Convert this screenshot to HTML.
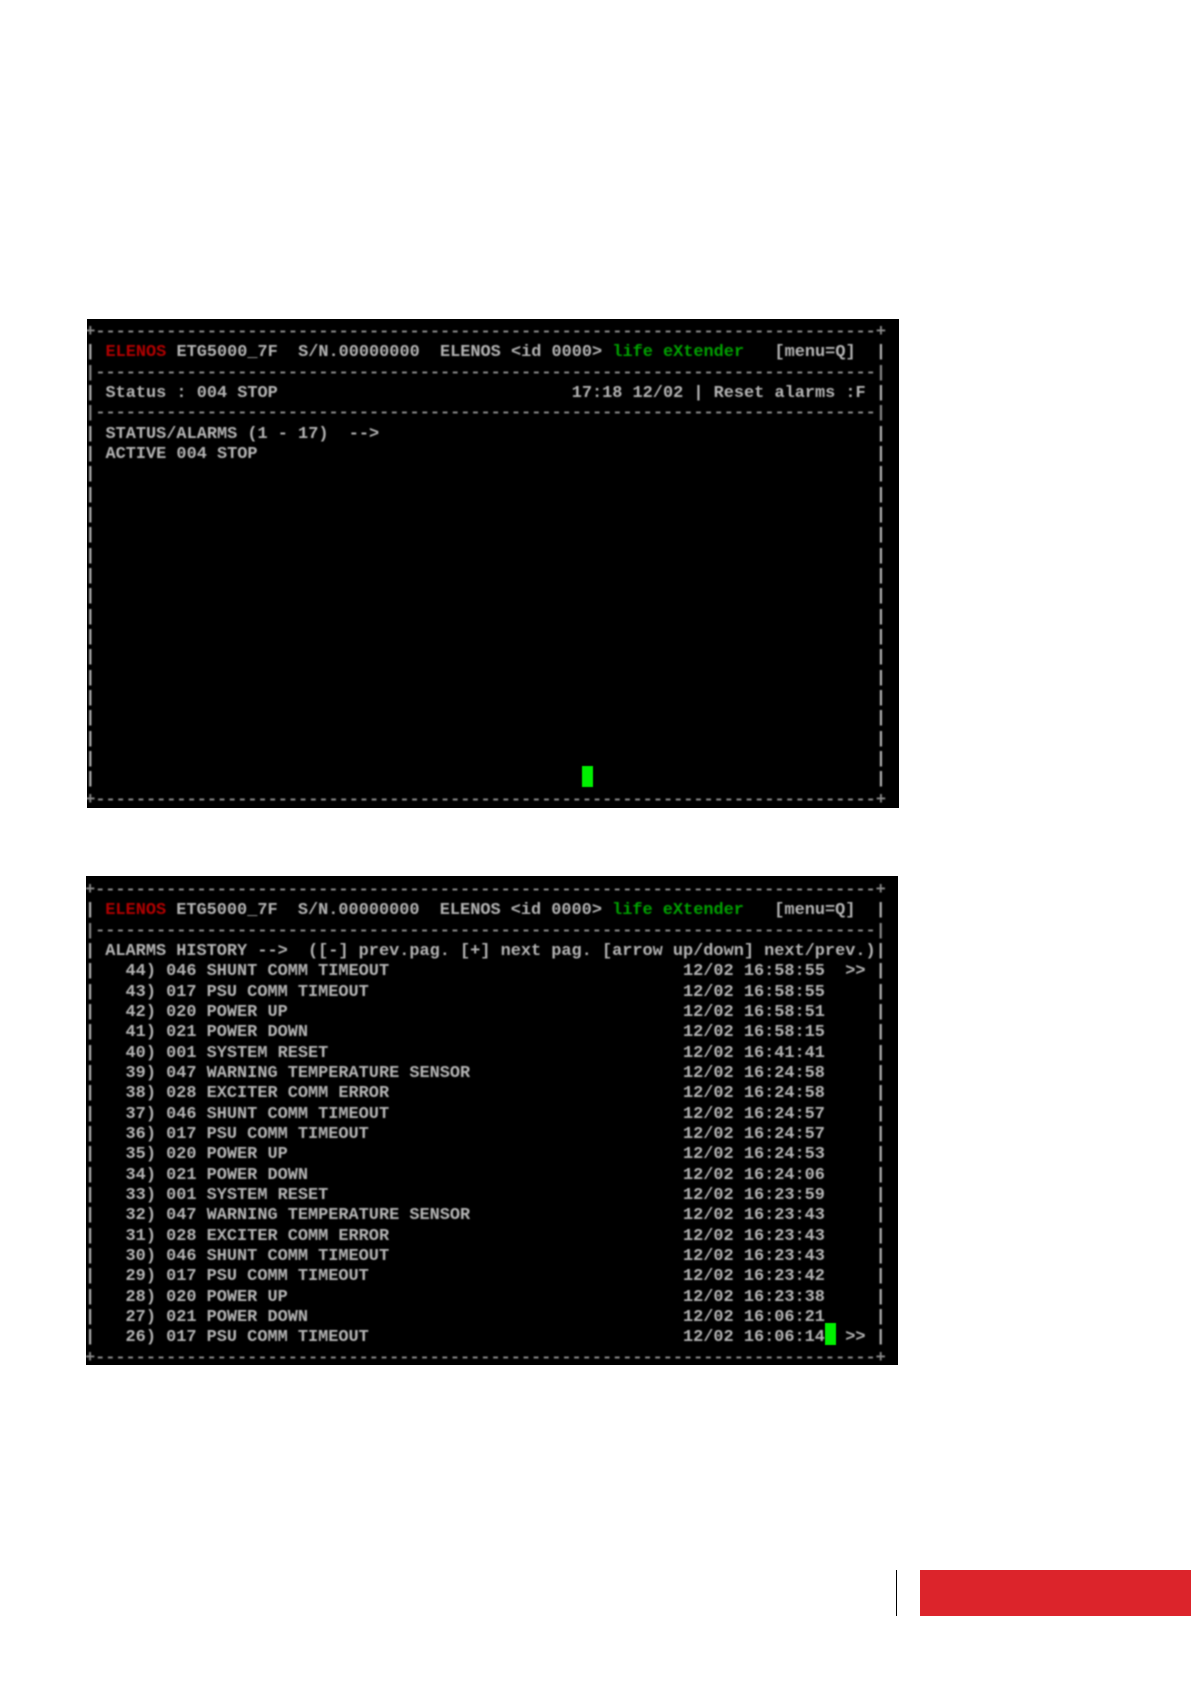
<!DOCTYPE html>
<html lang="en">
<head>
<meta charset="utf-8">
<title>Terminal screens</title>
<style>
html,body{margin:0;padding:0;background:#fff;}
body{position:relative;width:1191px;height:1684px;overflow:hidden;}
.term{position:absolute;background:#000;overflow:hidden;}
.in{position:absolute;font:bold 16.9px/20.33px "Liberation Mono",monospace;color:#b4b4b4;filter:blur(.8px);width:830px;}
.r{position:relative;height:20.33px;white-space:pre;}
.r::after{content:"|";position:absolute;left:78ch;top:0;}
.n::after{content:"";}
.t{position:absolute;left:59ch;top:0;}
.m{position:absolute;left:75ch;top:0;}
.x{position:absolute;top:0;}
.red{color:#b00000;}
.grn{color:#00a000;}
.dash{color:#8a8a8a;}
.cur{position:absolute;background:#00f000;filter:blur(.4px);}
#bar{position:absolute;left:896px;top:1570px;width:1px;height:46px;background:#000;}
#red{position:absolute;left:920px;top:1570px;width:271px;height:46px;background:#dc242b;}
</style>
</head>
<body>

<div class="term" style="left:87px;top:319px;width:812px;height:489px;">
<div class="in" style="left:-1.8px;top:4px;">
<div class="r n dash">+-----------------------------------------------------------------------------+</div>
<div class="r">| <span class="red">ELENOS</span> ETG5000_7F  S/N.00000000  ELENOS &lt;id 0000&gt; <span class="grn">life eXtender</span>   [menu=Q]</div>
<div class="r n dash">|-----------------------------------------------------------------------------|</div>
<div class="r">| Status : 004 STOP<span class="x" style="left:48ch">17:18 12/02 | Reset alarms :F</span></div>
<div class="r n dash">|-----------------------------------------------------------------------------|</div>
<div class="r">| STATUS/ALARMS (1 - 17)  --&gt;</div>
<div class="r">| ACTIVE 004 STOP</div>
<div class="r">|</div><div class="r">|</div><div class="r">|</div><div class="r">|</div>
<div class="r">|</div><div class="r">|</div><div class="r">|</div><div class="r">|</div>
<div class="r">|</div><div class="r">|</div><div class="r">|</div><div class="r">|</div>
<div class="r">|</div><div class="r">|</div><div class="r">|</div><div class="r">|</div>
<div class="r n dash">+-----------------------------------------------------------------------------+</div>
</div>
<div class="cur" style="left:495px;top:447px;width:11px;height:21px;"></div>
</div>

<div class="term" style="left:86px;top:876px;width:812px;height:489px;">
<div class="in" style="left:-1px;top:5px;">
<div class="r n dash">+-----------------------------------------------------------------------------+</div>
<div class="r">| <span class="red">ELENOS</span> ETG5000_7F  S/N.00000000  ELENOS &lt;id 0000&gt; <span class="grn">life eXtender</span>   [menu=Q]</div>
<div class="r n dash">|-----------------------------------------------------------------------------|</div>
<div class="r">| ALARMS HISTORY --&gt;  ([-] prev.pag. [+] next pag. [arrow up/down] next/prev.)</div>
<div class="r">|   44) 046 SHUNT COMM TIMEOUT<span class="t">12/02 16:58:55</span><span class="m">&gt;&gt;</span></div>
<div class="r">|   43) 017 PSU COMM TIMEOUT<span class="t">12/02 16:58:55</span></div>
<div class="r">|   42) 020 POWER UP<span class="t">12/02 16:58:51</span></div>
<div class="r">|   41) 021 POWER DOWN<span class="t">12/02 16:58:15</span></div>
<div class="r">|   40) 001 SYSTEM RESET<span class="t">12/02 16:41:41</span></div>
<div class="r">|   39) 047 WARNING TEMPERATURE SENSOR<span class="t">12/02 16:24:58</span></div>
<div class="r">|   38) 028 EXCITER COMM ERROR<span class="t">12/02 16:24:58</span></div>
<div class="r">|   37) 046 SHUNT COMM TIMEOUT<span class="t">12/02 16:24:57</span></div>
<div class="r">|   36) 017 PSU COMM TIMEOUT<span class="t">12/02 16:24:57</span></div>
<div class="r">|   35) 020 POWER UP<span class="t">12/02 16:24:53</span></div>
<div class="r">|   34) 021 POWER DOWN<span class="t">12/02 16:24:06</span></div>
<div class="r">|   33) 001 SYSTEM RESET<span class="t">12/02 16:23:59</span></div>
<div class="r">|   32) 047 WARNING TEMPERATURE SENSOR<span class="t">12/02 16:23:43</span></div>
<div class="r">|   31) 028 EXCITER COMM ERROR<span class="t">12/02 16:23:43</span></div>
<div class="r">|   30) 046 SHUNT COMM TIMEOUT<span class="t">12/02 16:23:43</span></div>
<div class="r">|   29) 017 PSU COMM TIMEOUT<span class="t">12/02 16:23:42</span></div>
<div class="r">|   28) 020 POWER UP<span class="t">12/02 16:23:38</span></div>
<div class="r">|   27) 021 POWER DOWN<span class="t">12/02 16:06:21</span></div>
<div class="r">|   26) 017 PSU COMM TIMEOUT<span class="t">12/02 16:06:14</span><span class="m">&gt;&gt;</span></div>
<div class="r n dash">+-----------------------------------------------------------------------------+</div>
</div>
<div class="cur" style="left:739px;top:447px;width:11px;height:22px;"></div>
</div>

<div id="bar"></div>
<div id="red"></div>
</body>
</html>
